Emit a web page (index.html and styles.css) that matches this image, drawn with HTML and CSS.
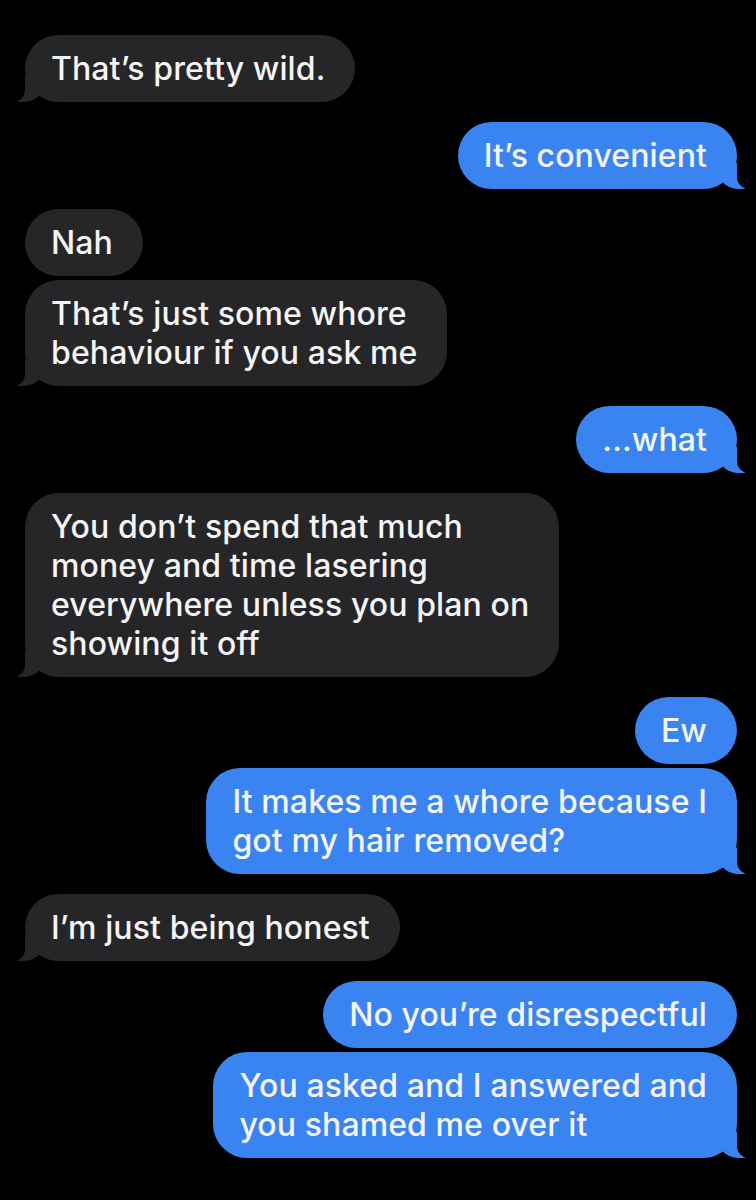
FILE: index.html
```html
<!DOCTYPE html>
<html lang="en">
<head>
    <meta charset="UTF-8">
    <meta name="viewport" content="width=device-width, initial-scale=1.0">
    <title>Messages</title>
    <link rel="stylesheet" href="styles.css">
</head>
<body>
    <!-- Conversation -->
    <div class="thread">
        <div class="group them">
            <div class="msg tail">That’s pretty wild.</div>
        </div>

        <div class="group me">
            <div class="msg tail">It’s convenient</div>
        </div>

        <div class="group them">
            <div class="msg">Nah</div>
            <div class="msg tail">That’s just some whore<br>behaviour if you ask me</div>
        </div>

        <div class="group me">
            <div class="msg tail">...what</div>
        </div>

        <div class="group them">
            <div class="msg tail">You don’t spend that much<br>money and time lasering<br>everywhere unless you plan on<br>showing it off</div>
        </div>

        <div class="group me">
            <div class="msg">Ew</div>
            <div class="msg tail">It makes me a whore because I<br>got my hair removed?</div>
        </div>

        <div class="group them">
            <div class="msg tail">I’m just being honest</div>
        </div>

        <div class="group me">
            <div class="msg">No you’re disrespectful</div>
            <div class="msg tail">You asked and I answered and<br>you shamed me over it</div>
        </div>
    </div>
</body>
</html>
```

FILE: styles.css
```css
/* Page */
body {
    margin: 0;
    background-color: #000;
    font-family: "Inter", "Liberation Sans", sans-serif;
}

.thread {
    display: flex;
    flex-direction: column;
    gap: 20px;
    padding: 35px 19px 40px 25px;
}

/* Message groups */
.group {
    display: flex;
    flex-direction: column;
    gap: 4px;
}

.group.them {
    align-items: flex-start;
}

.group.me {
    align-items: flex-end;
}

/* Bubbles */
.msg {
    position: relative;
    padding: 14px 30px 14px 26px;
    border-radius: 34px;
    font-size: 32px;
    font-weight: 500;
    line-height: 39px;
    letter-spacing: 0.1px;
    color: #f4f4f4;
    white-space: nowrap;
}

.them .msg {
    background-color: #262628;
}

.me .msg {
    background-color: #3a84f1;
}

/* Tails */
.msg.tail::before,
.msg.tail::after {
    content: "";
    position: absolute;
    bottom: 0;
    height: 26px;
}

.them .msg.tail::before {
    left: -8px;
    width: 26px;
    background-color: #262628;
    border-bottom-right-radius: 20px 16px;
}

.them .msg.tail::after {
    left: -26px;
    width: 26px;
    background-color: #000;
    border-bottom-right-radius: 12px;
}

.me .msg.tail::before {
    right: -8px;
    width: 26px;
    background-color: #3a84f1;
    border-bottom-left-radius: 20px 16px;
}

.me .msg.tail::after {
    right: -26px;
    width: 26px;
    background-color: #000;
    border-bottom-left-radius: 12px;
}
```
